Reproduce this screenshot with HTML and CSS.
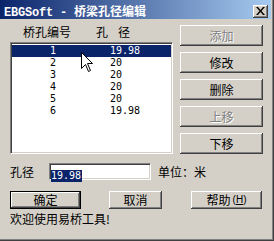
FILE: index.html
```html
<!DOCTYPE html>
<html>
<head>
<meta charset="utf-8">
<link rel="stylesheet" href="styles.css">
</head>
<body>
<div class="window">
  <div class="titlebar">
    <span class="title"><span class="latin">EBGSoft - </span>桥梁孔径编辑</span>
    <span class="close"><svg width="9" height="8" viewBox="0 0 9 8"><path d="M0 0h2l2.5 3 2.5-3h2L5.5 4 9 8H7L4.5 5 2 8H0l3.5-4z" fill="#000"/></svg></span>
  </div>
  <div class="client">
    <div class="main">
      <div class="left">
        <div class="header"><span class="h1">桥孔编号</span><span class="h2">孔</span><span class="h3">径</span></div>
        <div class="list">
          <div class="row sel"><span class="c1">1</span><span class="c2">19.98</span></div>
          <div class="row"><span class="c1">2</span><span class="c2">20</span></div>
          <div class="row"><span class="c1">3</span><span class="c2">20</span></div>
          <div class="row"><span class="c1">4</span><span class="c2">20</span></div>
          <div class="row"><span class="c1">5</span><span class="c2">20</span></div>
          <div class="row"><span class="c1">6</span><span class="c2">19.98</span></div>
        </div>
      </div>
      <div class="side">
        <button class="btn tall disabled">添加</button>
        <button class="btn tall">修改</button>
        <button class="btn tall">删除</button>
        <button class="btn tall disabled">上移</button>
        <button class="btn tall">下移</button>
      </div>
    </div>
    <div class="field">
      <span class="label">孔径</span>
      <div class="edit"><span class="selected">19.98</span></div>
      <span class="unit">单位：米</span>
    </div>
    <div class="actions">
      <button class="btn short ok default">确定</button>
      <button class="btn short cancel">取消</button>
      <button class="btn short help">帮助<span class="acc">(<u>H</u>)</span></button>
    </div>
    <div class="status">欢迎使用易桥工具!</div>
  </div>
  <svg class="cursor" width="13" height="21" viewBox="0 0 13 21"><path d="M0.5 0.5V16.5L4.5 12.5L7.5 19.5L9.5 18.5L6.5 11.5H11.5Z" fill="#fff" stroke="#000" stroke-width="1"/></svg>
</div>
</body>
</html>
```

FILE: styles.css
```css
body {
  margin: 0;
  background: #d4d0c8;
  font-family: "Noto Sans CJK SC", sans-serif;
  font-size: 12px;
  color: #000;
}
.window {
  position: relative;
  width: 274px;
  height: 241px;
  box-sizing: border-box;
  padding: 0 3px 2px 0;
  background: #d4d0c8;
  box-shadow: inset -1px -1px #404040, inset -2px -2px #808080;
  overflow: hidden;
}
.titlebar {
  height: 19px;
  display: flex;
  background: linear-gradient(to right, #0a246a, #a6caf0);
  color: #fff;
  font-weight: bold;
  padding-left: 4px;
}
.title {
  padding-top: 4px;
  line-height: 14px;
  white-space: pre;
}
.latin {
  font-family: "Liberation Mono", monospace;
  font-size: 12px;
  letter-spacing: -0.2px;
}
.close {
  margin-left: auto;
  margin-right: 3px;
  margin-top: 5px;
  width: 15px;
  height: 13px;
  background: #d4d0c8;
  box-shadow: inset -1px -1px #404040, inset 1px 1px #fff, inset -2px -2px #808080;
  display: flex;
  align-items: center;
  justify-content: center;
}
.close svg { display: block; margin-top: -1px; }
.client {
  padding-left: 10px;
  display: flex;
  flex-direction: column;
}
.main {
  display: grid;
  grid-template-columns: 163px 83px;
  column-gap: 7px;
}
.header {
  height: 23px;
  box-sizing: border-box;
  padding-top: 7px;
  line-height: 12px;
  display: flex;
}
.h1 { margin-left: 13px; }
.h2 { margin-left: 25px; }
.h3 { margin-left: 10px; }
.list {
  height: 112px;
  box-sizing: border-box;
  background: #fff;
  border: 1px solid;
  border-color: #808080 #fff #fff #808080;
  box-shadow: inset 1px 1px #404040, inset -1px -1px #d4d0c8;
  padding: 2px 1px 0 1px;
}
.row {
  height: 12px;
  line-height: 12px;
  display: flex;
  font-family: "DejaVu Sans Mono", monospace;
  font-size: 10px;
}
.c1 {
  width: 98px;
  box-sizing: border-box;
  padding-left: 38px;
}
.sel {
  background: #0a246a;
  color: #fff;
}
.side {
  display: flex;
  flex-direction: column;
  gap: 6px;
  padding-top: 6px;
}
.btn {
  appearance: none;
  border: 0;
  margin: 0;
  padding: 0;
  font: inherit;
  color: #000;
  background: #d4d0c8;
  box-shadow: inset -1px -1px #404040, inset 1px 1px #fff, inset -2px -2px #808080;
  display: flex;
  align-items: center;
  justify-content: center;
  line-height: 12px;
}
.tall { height: 21px; width: 83px; }
.disabled {
  color: #808080;
  text-shadow: 1px 1px 0 #fff;
}
.field {
  display: flex;
  align-items: center;
  margin-top: 9px;
  height: 17px;
}
.label { width: 39px; line-height: 12px; }
.edit {
  width: 102px;
  height: 17px;
  box-sizing: border-box;
  background: #fff;
  border: 1px solid;
  border-color: #808080 #fff #fff #808080;
  box-shadow: inset 1px 1px #404040, inset -1px -1px #d4d0c8;
  padding: 1px 1px;
}
.selected {
  display: inline-block;
  background: #0a246a;
  color: #fff;
  font-family: "DejaVu Sans Mono", monospace;
  font-size: 10px;
  line-height: 12px;
  height: 12px;
  padding-right: 1px;
}
.unit { margin-left: 7px; line-height: 12px; }
.actions {
  display: flex;
  margin-top: 11px;
}
.short { height: 18px; }
.ok { width: 71px; }
.default {
  border: 1px solid #000;
}
.cancel { width: 53px; margin-left: 28px; }
.help { width: 71px; margin-left: 29px; }
.acc {
  font-family: "Liberation Sans", sans-serif;
  font-size: 10px;
  margin-left: 2px;
}
.status {
  margin-top: 4px;
  line-height: 12px;
}
.cursor {
  position: absolute;
  left: 81px;
  top: 52px;
  display: block;
}
```
